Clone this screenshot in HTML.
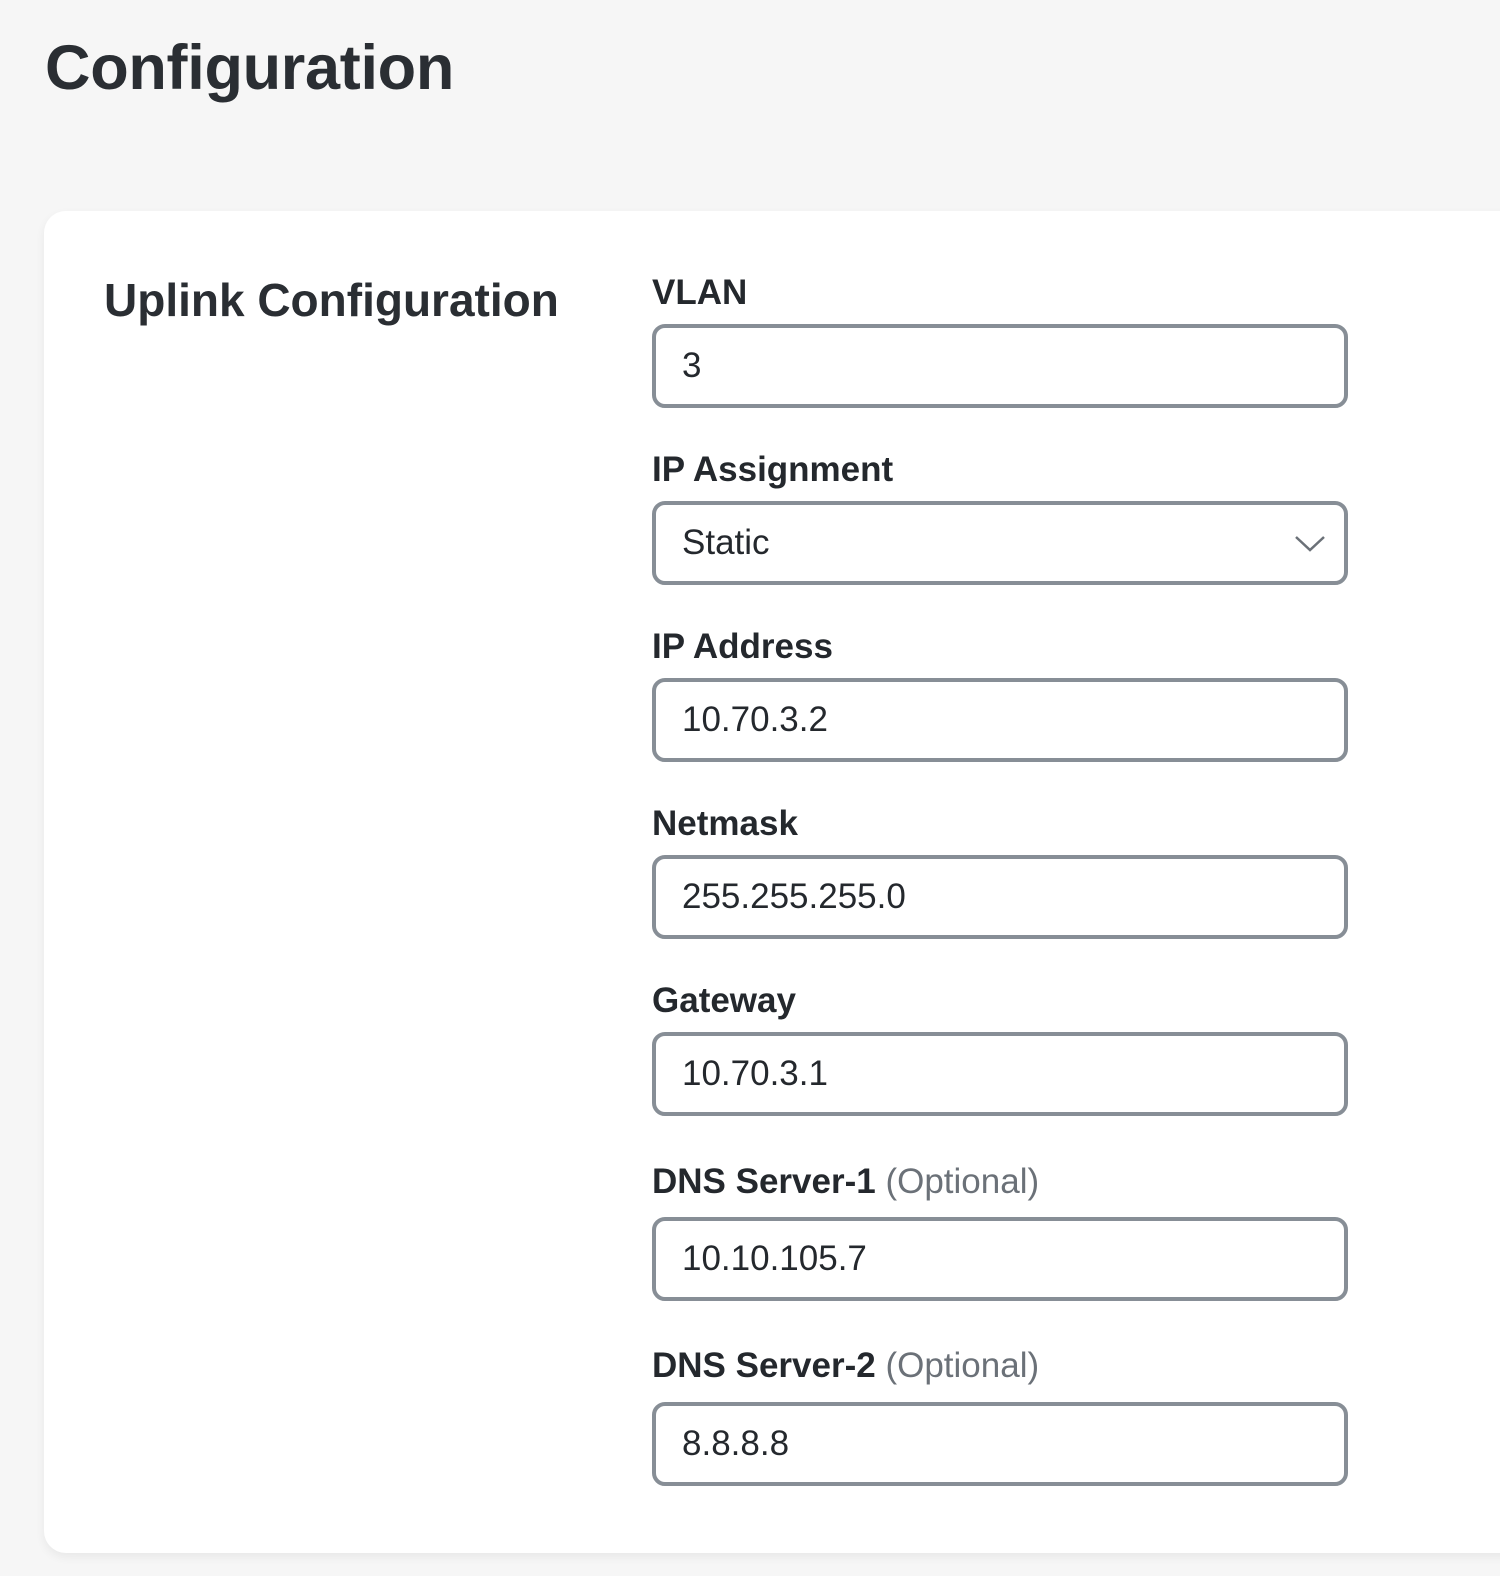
<!DOCTYPE html>
<html><head><meta charset="utf-8"><style>
html,body{margin:0;padding:0;width:1500px;height:1576px;overflow:hidden;background:#f6f6f6;font-family:"Liberation Sans",sans-serif;color:#24282d}
h1{position:absolute;left:45px;top:32px;margin:0;font-size:63px;font-weight:bold;letter-spacing:-0.3px;color:#2a2e33}
.card{position:absolute;left:44px;top:211px;width:1500px;height:1342px;background:#fff;border-radius:22px;box-shadow:0 4px 10px rgba(0,0,0,0.06)}
h2{position:absolute;left:104px;top:273px;margin:0;font-size:46px;font-weight:bold;color:#2a2e33}
.lbl{position:absolute;left:652px;font-size:35px;font-weight:bold;color:#24282d}
.lbl span{font-weight:normal;color:#6b7178}
.inp{position:absolute;left:652px;width:688px;height:76px;border:4px solid #878e96;border-radius:13px;background:#fff;box-sizing:content-box}
.inp div{position:absolute;left:26px;top:0;line-height:76px;font-size:35px;color:#24282d}
.chev{position:absolute;right:18px;top:24px}
</style></head><body>
<h1>Configuration</h1>
<div class="card"></div>
<h2>Uplink Configuration</h2>

<div class="lbl" style="top:273px">VLAN</div>
<div class="inp" style="top:324px"><div>3</div></div>

<div class="lbl" style="top:450px">IP Assignment</div>
<div class="inp" style="top:501px"><div>Static</div>
<svg class="chev" width="32" height="28" viewBox="0 0 32 28"><path d="M2 8 L16 21 L30 8" fill="none" stroke="#6b7178" stroke-width="2.5"/></svg></div>

<div class="lbl" style="top:627px">IP Address</div>
<div class="inp" style="top:678px"><div>10.70.3.2</div></div>

<div class="lbl" style="top:804px">Netmask</div>
<div class="inp" style="top:855px"><div>255.255.255.0</div></div>

<div class="lbl" style="top:981px">Gateway</div>
<div class="inp" style="top:1032px"><div>10.70.3.1</div></div>

<div class="lbl" style="top:1162px">DNS Server-1 <span>(Optional)</span></div>
<div class="inp" style="top:1217px"><div>10.10.105.7</div></div>

<div class="lbl" style="top:1346px">DNS Server-2 <span>(Optional)</span></div>
<div class="inp" style="top:1402px"><div>8.8.8.8</div></div>
</body></html>
